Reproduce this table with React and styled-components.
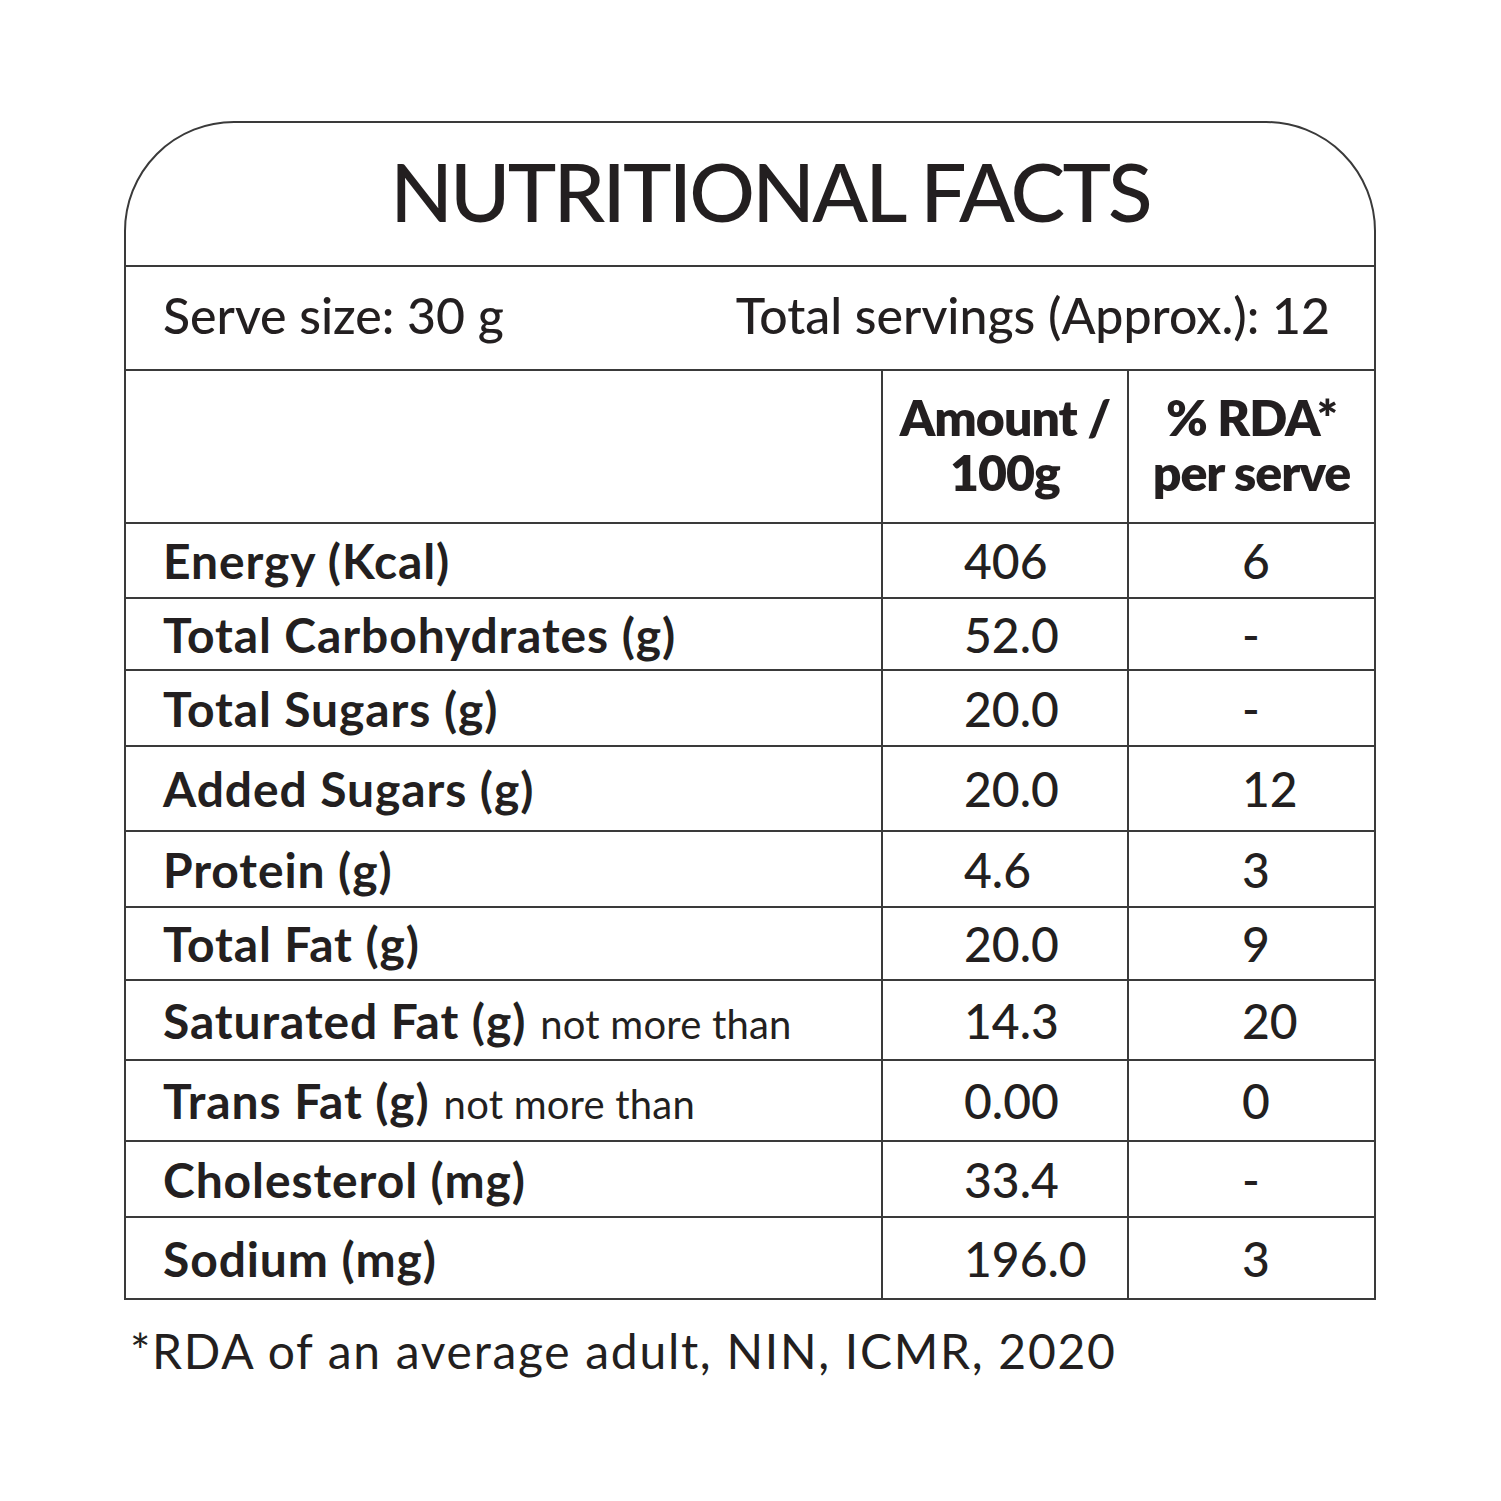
import React from 'react'
import styled, { createGlobalStyle } from 'styled-components'

const GlobalStyle = createGlobalStyle`
  html, body {
    margin: 0;
    padding: 0;
    background: #fff;
  }
  * {
    box-sizing: border-box;
  }
`

const rows = [
  { label: 'Energy (Kcal)', amount: '406', rda: '6', h: 75 },
  { label: 'Total Carbohydrates (g)', amount: '52.0', rda: '-', h: 72 },
  { label: 'Total Sugars (g)', amount: '20.0', rda: '-', h: 76 },
  { label: 'Added Sugars (g)', amount: '20.0', rda: '12', h: 85 },
  { label: 'Protein (g)', amount: '4.6', rda: '3', h: 76 },
  { label: 'Total Fat (g)', amount: '20.0', rda: '9', h: 73 },
  { label: 'Saturated Fat (g)', note: 'not more than', amount: '14.3', rda: '20', h: 80 },
  { label: 'Trans Fat (g)', note: 'not more than', amount: '0.00', rda: '0', h: 81 },
  { label: 'Cholesterol (mg)', amount: '33.4', rda: '-', h: 76 },
  { label: 'Sodium (mg)', amount: '196.0', rda: '3', h: 82 },
]

export default function App() {
  return (
    <Page>
      <GlobalStyle />
      <Label>
        <Title>NUTRITIONAL FACTS</Title>
        <ServeRow>
          <span>Serve size: 30 g</span>
          <span>Total servings (Approx.): 12</span>
        </ServeRow>
        <HeadRow>
          <HeadCell />
          <HeadCell>Amount /<br />100g</HeadCell>
          <HeadCell>% RDA*<br />per serve</HeadCell>
        </HeadRow>
        {rows.map((r) => (
          <DataRow key={r.label} $h={r.h}>
            <NameCell>
              {r.label}
              {r.note && <Note>{r.note}</Note>}
            </NameCell>
            <ValueCell $pad={81}>{r.amount}</ValueCell>
            <ValueCell $pad={113}>{r.rda}</ValueCell>
          </DataRow>
        ))}
      </Label>
      <Footnote>*RDA of an average adult, NIN, ICMR, 2020</Footnote>
    </Page>
  )
}

const Page = styled.div`
  padding: 121px 0 0 124px;
  font-family: Lato, 'Liberation Sans', sans-serif;
  color: #231f20;
`

const Label = styled.section`
  width: 1252px;
  border: 2px solid #3a3a3a;
  border-radius: 110px 110px 0 0;
`

const Title = styled.h1`
  margin: 0;
  height: 142px;
  display: flex;
  align-items: center;
  justify-content: center;
  font-size: 82px;
  font-weight: 500;
  letter-spacing: -2.8px;
  padding: 0 0 8px 40px;
`

const ServeRow = styled.div`
  height: 104px;
  border-top: 2px solid #3a3a3a;
  display: flex;
  align-items: center;
  justify-content: space-between;
  padding: 0 44px 6px 37px;
  font-size: 50px;
  font-weight: 500;
  letter-spacing: 0;
`

const Grid = styled.div`
  display: grid;
  grid-template-columns: 755px 246px 1fr;
  border-top: 2px solid #3a3a3a;
`

const HeadRow = styled(Grid)`
  height: 153px;
`

const HeadCell = styled.div`
  display: flex;
  align-items: center;
  justify-content: center;
  text-align: center;
  font-size: 50px;
  font-weight: 800;
  line-height: 55px;
  letter-spacing: -1px;
  padding-bottom: 4px;
  & + & {
    border-left: 2px solid #3a3a3a;
  }
`

const DataRow = styled(Grid)`
  height: ${(p) => p.$h}px;
`

const NameCell = styled.div`
  display: flex;
  align-items: baseline;
  align-self: center;
  padding-left: 37px;
  font-size: 48px;
  font-weight: 700;
  letter-spacing: 0.9px;
`

const Note = styled.span`
  margin-left: 14px;
  font-size: 40px;
  font-weight: 400;
  letter-spacing: 0.2px;
`

const ValueCell = styled.div`
  display: flex;
  align-items: center;
  border-left: 2px solid #3a3a3a;
  padding-left: ${(p) => p.$pad}px;
  font-size: 48px;
  font-weight: 500;
  letter-spacing: 0;
`

const Footnote = styled.p`
  margin: 22px 0 0 6px;
  font-size: 48px;
  font-weight: 400;
  letter-spacing: 1.7px;
`
